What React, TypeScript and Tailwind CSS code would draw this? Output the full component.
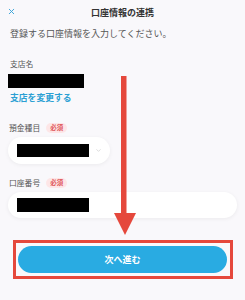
import { X, ChevronDown } from "lucide-react";

function Required() {
  return (
    <span className="ml-[6px] inline-flex h-[10px] items-center rounded-full bg-[#fde6e7] px-[4px] text-[6.5px] font-bold leading-none text-[#e0565a]">
      必須
    </span>
  );
}

export default function App() {
  return (
    <div
      className="relative h-[300px] w-[245px] overflow-hidden bg-[#f9f8fb] text-[#4a4a4a]"
      style={{ fontFamily: '"Noto Sans CJK JP", "Noto Sans", sans-serif' }}
    >
      {/* header */}
      <div className="relative flex h-[24px] items-center justify-center">
        <X className="absolute left-[7px] top-[7px] h-[9px] w-[9px] text-[#3aa3d9]" strokeWidth={2.5} />
        <span className="text-[9px] font-bold leading-none text-[#333]">口座情報の連携</span>
      </div>

      <div className="flex flex-col px-2">
        <p className="mt-[4px] pl-[2px] text-[9px] leading-[12px] text-[#555]">
          登録する口座情報を入力してください。
        </p>

        <p className="mt-[18px] pl-[2px] text-[7.8px] leading-[12px] text-[#555]">支店名</p>
        <div className="mt-[4px] h-[14px] w-[76px] bg-black" />
        <p className="mt-[4px] pl-[2px] text-[8.8px] font-bold leading-[12px] text-[#2b9fd3]">支店を変更する</p>

        <div className="mt-[18px] flex h-[11px] items-center pl-[1px]">
          <span className="text-[7.8px] leading-none text-[#555]">預金種目</span>
          <Required />
        </div>
        <div className="mt-[4px] flex h-[27px] w-[102px] items-center justify-between rounded-[14px] bg-white pl-[9px] pr-[8px] shadow-[0_1px_4px_rgba(0,0,0,0.06)]">
          <div className="h-[13px] w-[72px] bg-black" />
          <ChevronDown className="h-[7px] w-[7px] text-[#c4c4c4]" strokeWidth={2} />
        </div>

        <div className="mt-[13px] flex h-[11px] items-center pl-[1px]">
          <span className="text-[7.8px] leading-none text-[#555]">口座番号</span>
          <Required />
        </div>
        <div className="mt-[4px] flex h-[26px] items-center rounded-[13px] bg-white pl-[9px] shadow-[0_1px_4px_rgba(0,0,0,0.06)]">
          <div className="h-[14px] w-[72px] bg-black" />
        </div>

        <button className="mx-[10px] mt-[28px] flex h-[27px] items-center justify-center rounded-full bg-[#29abe2] text-[9px] font-bold text-white">
          次へ進む
        </button>
      </div>

      {/* annotation overlay */}
      <svg className="absolute left-0 top-0" width="245" height="300" viewBox="0 0 245 300">
        <rect x="121" y="76" width="5.5" height="140" fill="#e5483c" />
        <polygon points="114,213 136,213 125,235" fill="#e5483c" />
      </svg>
      <div className="absolute left-[13px] top-[240px] h-[39px] w-[220px] border-[3px] border-[#e5483c]" />
    </div>
  );
}
